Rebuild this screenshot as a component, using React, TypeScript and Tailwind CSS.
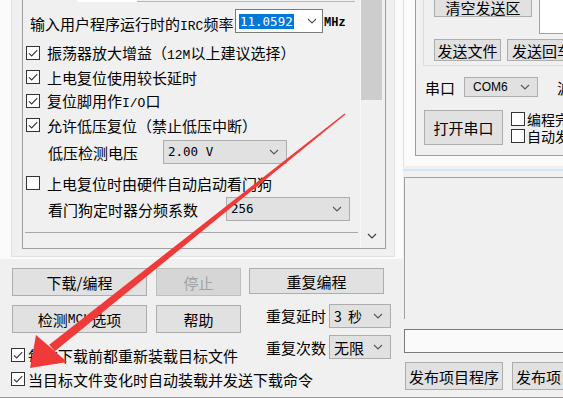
import type { ReactNode } from 'react';

const mono = "font-['Liberation_Mono',monospace]";
const smono = "font-['DejaVu_Sans_Mono',monospace]";

function Check({ on }: { on?: boolean }) {
  return (
    <span className="flex h-[14px] w-[14px] shrink-0 items-center justify-center border border-[#333333] bg-white">
      {on && (
        <svg viewBox="0 0 12 12" className="h-[12px] w-[12px]">
          <path d="M2 6.3l2.7 2.7L10.2 3.2" fill="none" stroke="#3a3a3a" strokeWidth="1.2" />
        </svg>
      )}
    </span>
  );
}

function Chev({ color = '#5a5a5a' }: { color?: string }) {
  return (
    <svg viewBox="0 0 10 6" className="h-[6px] w-[10px] shrink-0">
      <path d="M1 1l4 4 4-4" fill="none" stroke={color} strokeWidth="1.2" />
    </svg>
  );
}

function Btn({ children, className = '' }: { children: ReactNode; className?: string }) {
  return (
    <div
      className={`flex shrink-0 items-center justify-center border border-[#adadad] bg-[#e1e1e1] text-[15px] leading-none ${className}`}
    >
      {children}
    </div>
  );
}

function Combo({ children, className = '' }: { children: ReactNode; className?: string }) {
  return (
    <div
      className={`flex shrink-0 items-center justify-between border border-[#adadad] bg-[#e1e1e1] pl-[4px] pr-[7px] ${className}`}
    >
      {children}
      <Chev />
    </div>
  );
}

function CheckRow({ on, children }: { on?: boolean; children: ReactNode }) {
  return (
    <div className="flex h-[24px] items-center gap-[7px] pl-[3px] text-[15px] leading-none">
      <Check on={on} />
      <span>{children}</span>
    </div>
  );
}

export default function App() {
  return (
    <div className="relative flex h-[398px] w-[563px] overflow-hidden border-b border-[#9a9a9a] bg-[#f0f0f0] font-['Noto_Sans_CJK_SC','Noto_Sans',sans-serif] text-black">
      {/* left column */}
      <div className="flex w-[403px] shrink-0 flex-col">
        <div className="h-[259px] bg-[#fbfbfb] pb-[2px] pl-[11px] pr-[8px]">
          <div className="h-full border-x border-b border-[#e2e2e2] bg-[#f0f0f0] pb-[7px] pl-[10px] pr-[8px]">
            <div className="flex h-full border-x border-b border-[#a0a0a0]">
              <div className="min-w-0 flex-1">
                <div className="ml-[54px] mr-[5px] flex h-[2px]">
                  <div className="w-[60px] bg-white" />
                  <div className="flex-1 border-b border-[#b8b8b8]" />
                </div>
                <div className="mt-[7px] flex h-[24px] items-center pl-[7px] text-[15px] leading-none">
                  <span className="w-[205px] shrink-0 pt-[6px]">
                    输入用户程序运行时的<span className={`${mono} text-[13px]`}>IRC</span>频率
                  </span>
                  <div className="flex h-[24px] w-[88px] shrink-0 items-center justify-between border border-[#7a7a7a] bg-white pl-[3px] pr-[5px]">
                    <span className={`${smono} bg-[#0078d7] px-[1px] text-[12.5px] leading-[15px] text-white`}>11.0592</span>
                    <Chev />
                  </div>
                  <span className={`${mono} ml-[1px] pt-[3px] text-[12px] font-bold`}>MHz</span>
                </div>
                <div className="mt-[8px]">
                  <CheckRow on>
                    振荡器放大增益（<span className={`${mono} text-[13px]`}>12M</span>以上建议选择）
                  </CheckRow>
                  <CheckRow on>上电复位使用较长延时</CheckRow>
                  <CheckRow on>
                    复位脚用作<span className={`${mono} text-[13px]`}>I/O</span>口
                  </CheckRow>
                  <CheckRow on>允许低压复位（禁止低压中断）</CheckRow>
                </div>
                <div className="mt-[3px] flex h-[24px] items-center pl-[25px] text-[15px] leading-none">
                  <span className="w-[115px] shrink-0">低压检测电压</span>
                  <Combo className="h-[24px] w-[124px]">
                    <span className={`${smono} text-[12.5px]`}>2.00 V</span>
                  </Combo>
                </div>
                <div className="mt-[7px]">
                  <CheckRow>上电复位时由硬件自动启动看门狗</CheckRow>
                </div>
                <div className="mt-[2px] flex h-[24px] items-center pl-[25px] text-[15px] leading-none">
                  <span className="w-[178px] shrink-0">看门狗定时器分频系数</span>
                  <Combo className="h-[24px] w-[124px]">
                    <span className={`${smono} text-[12.5px]`}>256</span>
                  </Combo>
                </div>
                <div className="mx-[2px] mt-[11px] border-t border-[#a8a8a8]" />
              </div>
              <div className="mr-[2px] flex w-[23px] shrink-0 flex-col justify-between border-l border-[#f8f8f8] pr-[1px]">
                <div className="h-[100px] bg-[#cdcdcd]" />
                <div className="flex h-[25px] items-center justify-center">
                  <Chev color="#404040" />
                </div>
              </div>
            </div>
          </div>
        </div>

        {/* bottom controls */}
        <div className="mt-[9px] flex items-start pl-[12px]">
          <Btn className="h-[28px] w-[135px]">下载/编程</Btn>
          <div className="ml-[9px] flex h-[28px] w-[85px] shrink-0 items-center justify-center border border-[#bfbfbf] bg-[#d6d6d6] text-[15px] leading-none text-[#a3a3a3]">
            停止
          </div>
          <Btn className="ml-[8px] h-[26px] w-[135px]">重复编程</Btn>
        </div>
        <div className="mt-[9px] flex items-start pl-[12px]">
          <Btn className="h-[28px] w-[135px]">
            检测<span className={`${mono} text-[13px]`}>MCU</span>选项
          </Btn>
          <Btn className="ml-[9px] h-[28px] w-[85px]">帮助</Btn>
          <span className="ml-[25px] flex h-[20px] w-[63px] shrink-0 items-center text-[15px] leading-none">重复延时</span>
          <Combo className="-mt-[1px] h-[24px] w-[62px]">
            <span className="text-[14px] leading-none">3&nbsp;&nbsp;秒</span>
          </Combo>
        </div>
        <div className="mt-[2px] flex items-start pl-[11px]">
          <div className="mt-[12px] flex h-[16px] w-[255px] shrink-0 items-center gap-[3px] text-[15px] leading-none">
            <Check on />
            <span>每次下载前都重新装载目标文件</span>
          </div>
          <span className="flex h-[24px] w-[63px] shrink-0 items-center text-[15px] leading-none">重复次数</span>
          <Combo className="h-[24px] w-[62px]">
            <span className="text-[15px] leading-none">无限</span>
          </Combo>
        </div>
        <div className="mt-[8px] flex h-[16px] items-center gap-[3px] pl-[11px] text-[15px] leading-none">
          <Check on />
          <span className="whitespace-nowrap">当目标文件变化时自动装载并发送下载命令</span>
        </div>
      </div>

      {/* right column */}
      <div className="flex min-w-0 flex-1 flex-col overflow-hidden">
        <div className="h-[166px] border-l border-[#dedede] bg-[#fbfbfb] pl-[11px]">
          <div className="h-[156px] border-b border-l border-[#9e9e9e] bg-[#f0f0f0]">
            <div className="ml-[7px] h-[66px] border-b border-l border-[#dcdcdc]">
              <div className="flex h-[34px] items-start pl-[10px]">
                <Btn className="-mt-[10px] h-[27px] w-[98px] pt-[8px]">清空发送区</Btn>
                <div className="ml-[7px] h-[34px] flex-1 border-b border-l border-[#a0a0a0] bg-white" />
              </div>
              <div className="mt-[5px] flex gap-[6px] whitespace-nowrap pl-[10px]">
                <Btn className="h-[22px] w-[67px]">发送文件</Btn>
                <Btn className="h-[22px] w-[70px]">发送回车</Btn>
              </div>
            </div>
            <div className="mt-[11px] flex h-[20px] items-center whitespace-nowrap pl-[9px] text-[15px] leading-none">
              <span className="w-[39px] shrink-0">串口</span>
              <Combo className="h-[20px] w-[74px] pl-[8px]">
                <span className="font-['Liberation_Sans_Narrow','Liberation_Sans',sans-serif] text-[12px] leading-none">COM6</span>
              </Combo>
              <span className="ml-[19px] shrink-0">波特率</span>
            </div>
            <div className="mt-[13px] flex items-start whitespace-nowrap pl-[8px]">
              <Btn className="h-[35px] w-[79px]">打开串口</Btn>
              <div className="ml-[8px] mt-[2px] flex flex-col gap-[3px] text-[14px] leading-[14px]">
                <div className="flex h-[14px] items-center gap-[2px]">
                  <Check />
                  <span>编程完成后自动打开串口</span>
                </div>
                <div className="flex h-[14px] items-center gap-[2px]">
                  <Check />
                  <span>自动发送</span>
                </div>
              </div>
            </div>
          </div>
        </div>
        <div className="mt-[3px] h-[2px] bg-[#d3e6f5]" />
        <div className="ml-[1px] mt-[6px] h-[142px] border-l border-t border-[#a0a0a0] bg-[#f0f0f0]" />
        <div className="ml-[1px] mt-[10px] h-[24px] border-y border-l border-[#7a7a7a] bg-[#fafafa]" />
        <div className="ml-[2px] mt-[9px] flex gap-[9px] whitespace-nowrap">
          <Btn className="h-[28px] w-[98px]">发布项目程序</Btn>
          <Btn className="h-[28px] w-[98px]">发布项目帮助</Btn>
        </div>
      </div>

      {/* red annotation arrow */}
      <svg className="pointer-events-none absolute left-0 top-0" width="563" height="398" viewBox="0 0 563 398">
        <polygon points="345.4,114.5 54.8,351.3 49.2,344.7 344.6,113.5" fill="#f03a3a" />
        <polygon points="30,368 36,335 50,347 67,362" fill="#f03a3a" />
      </svg>
    </div>
  );
}
